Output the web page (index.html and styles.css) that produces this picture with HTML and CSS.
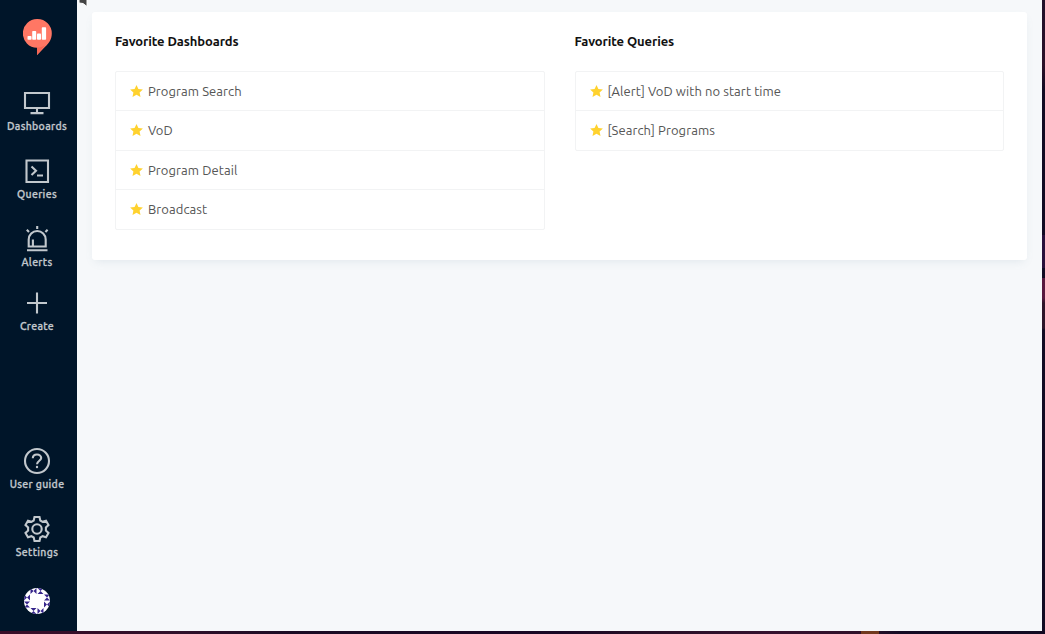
FILE: index.html
```html
<!DOCTYPE html>
<html lang="en">
<head>
<meta charset="utf-8">
<title>Redash</title>
<link rel="stylesheet" href="styles.css">
</head>
<body>
<div class="app">
  <nav class="sidebar">
    <a class="logo"><svg width="29" height="37" viewBox="0 0 29 37"><path fill="#ff7764" d="M14.5 0a14.4 14.4 0 0 1 14.3 14.5c0 5.7-2.8 9.8-6.700 13.300L14 36.300v-7.500A14.400 14.400 0 0 1 14.500 0z"/><path fill="#f05c49" d="M14 28.500c2.800 0 5.500-.8 8-2.300L14 36z" opacity=".6"/><g fill="#fff"><rect x="4.500" y="17" width="4" height="3.700" rx=".8"/><rect x="9.200" y="12" width="4" height="8.700" rx=".8"/><rect x="14" y="14.600" width="4" height="6.100" rx=".8"/><rect x="18.800" y="8.300" width="4.300" height="12.400" rx=".8"/></g></svg></a>
    <a class="item"><svg class="icon" viewBox="0 0 28 28"><path d="M2 4h24v15H2zM14 19v5M7.500 24.100h13"/></svg><span class="label">Dashboards</span></a>
    <a class="item"><svg class="icon" viewBox="0 0 28 28"><path d="M3.500 3.500h21.500v21.500H3.500zM8.500 9.500l4.500 4.300-4.500 4.300M14 18.500h6"/></svg><span class="label">Queries</span></a>
    <a class="item alerts"><svg class="icon" viewBox="0 0 28 28"><path d="M5.700 21.500v-7a8.500 8.500 0 0 1 17 0v7zM4 25.200h20.500M9.900 21v-6.500M14.200 1v3M3.800 4.700l2.200 2.200M24.600 4.700l-2.200 2.200"/></svg><span class="label">Alerts</span></a>
    <a class="item"><svg class="icon" viewBox="0 0 28 28"><path d="M14 3.500v21M4 14h20"/></svg><span class="label">Create</span></a>
    <div class="spacer"></div>
    <a class="item"><svg class="icon" viewBox="0 0 28 28"><circle cx="14" cy="14" r="12"/><path d="M9.800 11.200c0-2.300 1.900-3.700 4.200-3.700s4.200 1.400 4.200 3.600c0 2.500-4.200 2.900-4.200 6.100"/><circle class="dot" cx="14" cy="20" r="1.200"/></svg><span class="label">User guide</span></a>
    <a class="item"><svg class="icon" viewBox="0 0 28 28"><path d="M11.500 2h5l.8 3.500 2.300 1.300 3.400-1.100 2.500 4.400-2.600 2.400v3l2.600 2.400-2.500 4.400-3.400-1.100-2.300 1.300-.8 3.500h-5l-.8-3.500-2.300-1.300L5 22.300l-2.500-4.400 2.600-2.400v-3l-2.600-2.400L5 5.700l3.400 1.100 2.300-1.300z"/><circle cx="14" cy="14" r="4.700"/></svg><span class="label">Settings</span></a>
    <a class="avatar"><svg width="26" height="26" viewBox="0 0 26 26"><defs><clipPath id="round"><circle cx="13" cy="13" r="13"/></clipPath><g id="side"><path d="M6.500 0v6l3-3zM12.500 0v6l-3-3zM13.500 0h6l-3 3zM13.500 6h6l-3-3z"/></g></defs><g clip-path="url(#round)"><path fill="#fff" d="M0 0h26v26H0z"/><g fill="#36258b"><use href="#side"/><use href="#side" transform="rotate(90 13 13)"/><use href="#side" transform="rotate(180 13 13)"/><use href="#side" transform="rotate(270 13 13)"/></g></g></svg></a>
  </nav>
  <main class="content">
    <section class="card">
      <div class="column">
        <h2 class="title">Favorite Dashboards</h2>
        <div class="list">
          <a class="row"><svg class="star" viewBox="0 0 13 12"><path d="M6.500 0l1.900 4 4.500.5-3.300 3 .9 4.500-4-2.200-4 2.200.9-4.500-3.300-3 4.500-.5z"/></svg><span>Program Search</span></a>
          <a class="row"><svg class="star" viewBox="0 0 13 12"><path d="M6.500 0l1.900 4 4.500.5-3.300 3 .9 4.500-4-2.200-4 2.200.9-4.500-3.300-3 4.500-.5z"/></svg><span>VoD</span></a>
          <a class="row"><svg class="star" viewBox="0 0 13 12"><path d="M6.500 0l1.900 4 4.500.5-3.300 3 .9 4.500-4-2.200-4 2.200.9-4.500-3.300-3 4.500-.5z"/></svg><span>Program Detail</span></a>
          <a class="row"><svg class="star" viewBox="0 0 13 12"><path d="M6.500 0l1.900 4 4.500.5-3.300 3 .9 4.500-4-2.200-4 2.200.9-4.500-3.300-3 4.500-.5z"/></svg><span>Broadcast</span></a>
        </div>
      </div>
      <div class="column">
        <h2 class="title">Favorite Queries</h2>
        <div class="list">
          <a class="row"><svg class="star" viewBox="0 0 13 12"><path d="M6.500 0l1.900 4 4.500.5-3.300 3 .9 4.500-4-2.200-4 2.200.9-4.500-3.300-3 4.500-.5z"/></svg><span>[Alert] VoD with no start time</span></a>
          <a class="row"><svg class="star" viewBox="0 0 13 12"><path d="M6.500 0l1.900 4 4.500.5-3.300 3 .9 4.500-4-2.200-4 2.200.9-4.500-3.300-3 4.500-.5z"/></svg><span>[Search] Programs</span></a>
        </div>
      </div>
    </section>
  </main>
  <svg class="pointer" width="11" height="8" viewBox="0 0 11 8"><path d="M1 -1v4l4 .5L9 6.500V-1z" fill="#444" stroke="#fff"/></svg>
</div>
</body>
</html>
```
FILE: styles.css
```css
* { box-sizing: border-box; }
body {
  margin: 0;
  width: 1045px;
  height: 634px;
  overflow: hidden;
  background:
    linear-gradient(90deg, transparent 861px, #71391f 861px 879px, transparent 879px) 0 631px / 100% 3px no-repeat,
    linear-gradient(90deg, #390d28 0, #30102a 180px, #1b0b24 290px, #190624 560px, #260f26 640px, #35112e 770px, #30112a 860px, #140b24 900px, #120a22 100%) 0 631px / 100% 3px no-repeat,
    linear-gradient(#21102a 0, #2b1028 65px, #120b23 90px, #120b23 235px, #29103b 235px 268px, #120b23 268px 278px, #58183e 278px 298px, #2d1529 303px 328px, #120b23 330px) 1042px 0 / 3px 100% no-repeat;
  font-family: Ubuntu, "Noto Sans", sans-serif;
}
.app { position: relative; display: flex; width: 1042px; height: 631px; background: #f6f8fa; }
.sidebar {
  display: flex;
  flex-direction: column;
  align-items: center;
  width: 77px;
  padding: 19px 3px 17px 0;
  background: #001529;
}
.logo { height: 37px; margin-bottom: 33px; }
.logo svg, .avatar svg { display: block; }
.item { display: flex; flex-direction: column; align-items: center; height: 45px; margin-bottom: 23px; }
.alerts { margin-bottom: 19px; }
.icon { width: 28px; height: 28px; fill: none; stroke: #c2c8cd; stroke-width: 2.1; }
.dot { fill: #c2c8cd; stroke: none; }
.label {
  margin-top: 1px;
  color: #c2c8cd;
  font-size: 10.5px;
  font-weight: 500;
  line-height: 16px;
  letter-spacing: .33px;
  white-space: nowrap;
  -webkit-text-stroke: .3px #c2c8cd;
}
.spacer { flex: 1; }
.avatar { margin-top: 5px; }
.content { flex: 1; padding: 12px 15px; }
.card {
  display: grid;
  grid-template-columns: 429.5px 429.5px;
  gap: 30px;
  height: 248px;
  padding: 20px 23px;
  border-radius: 3px;
  background: #fff;
  box-shadow: 0 4px 9px -3px rgba(102, 136, 153, .15);
}
.title { margin: 0 0 20px; color: #111; font-size: 13px; font-weight: 600; line-height: 19px; letter-spacing: -.11px; }
.list { border: 1px solid #f2f3f4; border-radius: 2px; }
.row {
  display: flex;
  align-items: center;
  gap: 5px;
  height: 38px;
  padding-left: 14px;
  color: #555;
  font-size: 13px;
  line-height: 20px;
  letter-spacing: .08px;
  white-space: nowrap;
}
.row + .row { height: 39px; border-top: 1px solid #f2f3f4; }
.row:nth-child(even) { height: 40px !important; padding-bottom: 1px; }
.star { width: 13px; height: 12px; fill: #ffd22e; }
.pointer { position: absolute; left: 78px; top: 0; }
```
